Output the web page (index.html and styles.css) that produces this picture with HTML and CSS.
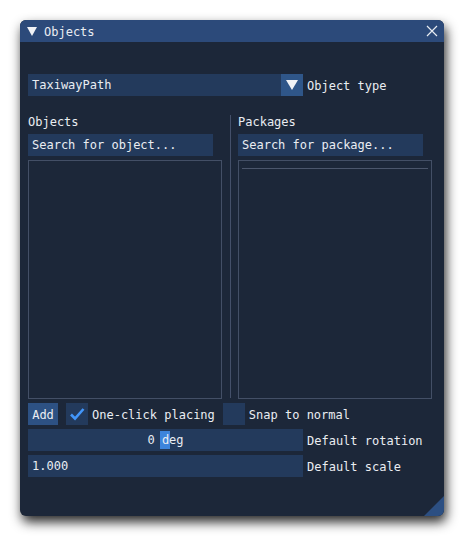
FILE: index.html
```html
<!DOCTYPE html>
<html lang="en">
<head>
    <meta charset="UTF-8">
    <title>Objects</title>
    <link rel="stylesheet" href="styles.css">
</head>
<body>

    <div class="window">
        <div class="title-bar">
            <span class="collapse-arrow"></span>
            <span class="title">Objects</span>
            <svg class="close" width="12" height="12" viewBox="0 0 12 12">
                <path d="M1 1 L11 11 M11 1 L1 11" stroke="#e8ecf2" stroke-width="1.2" fill="none"/>
            </svg>
        </div>

        <div class="content">
            <div class="row top-row">
                <div class="combo">
                    <span class="combo-value">TaxiwayPath</span>
                    <span class="combo-button"><span class="tri"></span></span>
                </div>
                <span class="label">Object type</span>
            </div>

            <div class="columns">
                <div class="column">
                    <div class="col-label">Objects</div>
                    <div class="search">Search for object...</div>
                    <div class="list"></div>
                </div>
                <div class="col-sep"></div>
                <div class="column right">
                    <div class="col-label">Packages</div>
                    <div class="search">Search for package...</div>
                    <div class="list">
                        <div class="list-rule"></div>
                    </div>
                </div>
            </div>

            <div class="row options">
                <button class="btn">Add</button>
                <span class="checkbox">
                    <svg width="22" height="22" viewBox="0 0 22 22">
                        <path d="M5 11.5 L9 15.5 L17.5 6" stroke="#4296fa" stroke-width="2.6" fill="none"/>
                    </svg>
                </span>
                <span class="check-label">One-click placing</span>
                <span class="checkbox"></span>
                <span class="check-label">Snap to normal</span>
            </div>

            <div class="row">
                <div class="slider">
                    <span class="grab"></span>
                    <span class="slider-text">0 deg</span>
                </div>
                <span class="label">Default rotation</span>
            </div>

            <div class="row">
                <div class="field">1.000</div>
                <span class="label">Default scale</span>
            </div>
        </div>

        <span class="resize-grip"></span>
    </div>

</body>
</html>
```

FILE: styles.css
```css
body {
    margin: 0;
    padding: 20px 0 21px 20px;
    background: #ffffff;
    font-family: "DejaVu Sans Mono", "Liberation Mono", monospace;
    font-size: 12px;
    color: #eaedf2;
}
.window {
    position: relative;
    width: 424px;
    height: 496px;
    background: #1c2739;
    border-radius: 6px;
    overflow: hidden;
    box-shadow: 2px 6px 12px rgba(0, 0, 0, 0.85);
}
.title-bar {
    height: 22px;
    display: flex;
    align-items: center;
    background: #2c4a7a;
    padding: 0 6px 0 7px;
}
.collapse-arrow {
    width: 0;
    height: 0;
    border-left: 5px solid transparent;
    border-right: 5px solid transparent;
    border-top: 9px solid #f0f2f6;
    margin-right: 7px;
}
.title {
    flex: 1;
    line-height: 22px;
    padding-top: 1px;
}
.close {
    display: block;
}
.content {
    padding: 32px 8px 0 8px;
}
.row {
    display: flex;
    align-items: center;
    height: 22px;
    margin-bottom: 4px;
}
.label {
    margin-left: 4px;
    padding-top: 1px;
}
.combo {
    width: 275px;
    height: 22px;
    display: flex;
    background: #233a5c;
}
.combo-value {
    flex: 1;
    line-height: 23px;
    padding-left: 4px;
}
.combo-button {
    width: 22px;
    height: 22px;
    background: #2f5689;
    display: flex;
    align-items: center;
    justify-content: center;
}
.tri {
    width: 0;
    height: 0;
    border-left: 6px solid transparent;
    border-right: 6px solid transparent;
    border-top: 10px solid #f0f2f6;
}
.columns {
    display: flex;
    margin-top: 18px;
    height: 289px;
}
.column {
    width: 202px;
    display: flex;
    flex-direction: column;
}
.column.right {
    padding-left: 7px;
    width: 198px;
}
.col-sep {
    width: 1px;
    background: #44506a;
    margin-top: 1px;
    margin-bottom: 5px;
}
.col-label {
    height: 16px;
    line-height: 17px;
    margin-bottom: 4px;
}
.search {
    width: 181px;
    height: 22px;
    line-height: 23px;
    padding-left: 4px;
    background: #233a5c;
    margin-bottom: 4px;
}
.list {
    width: 192px;
    height: 237px;
    border: 1px solid #434f66;
}
.list-rule {
    height: 1px;
    margin: 7px 3px 0 3px;
    background: #4b566c;
}
.btn {
    height: 22px;
    width: 30px;
    border: none;
    padding: 1px 0 0 0;
    background: #2d5183;
    color: #eaedf2;
    font-family: inherit;
    font-size: 12px;
    margin-right: 8px;
}
.checkbox {
    width: 22px;
    height: 22px;
    background: #233a5c;
    display: block;
}
.checkbox svg {
    display: block;
}
.check-label {
    margin-left: 4px;
    margin-right: 8px;
    padding-top: 1px;
}
.slider,
.field {
    position: relative;
    width: 275px;
    height: 22px;
    background: #233a5c;
}
.slider-text {
    position: relative;
    display: block;
    text-align: center;
    line-height: 23px;
}
.grab {
    position: absolute;
    left: 132px;
    top: 2px;
    width: 10px;
    height: 18px;
    background: #3d84dc;
}
.field {
    line-height: 23px;
    padding-left: 4px;
    width: 271px;
}
.resize-grip {
    position: absolute;
    right: 0;
    bottom: 0;
    width: 0;
    height: 0;
    border-left: 20px solid transparent;
    border-bottom: 20px solid #2c4f82;
}
```
